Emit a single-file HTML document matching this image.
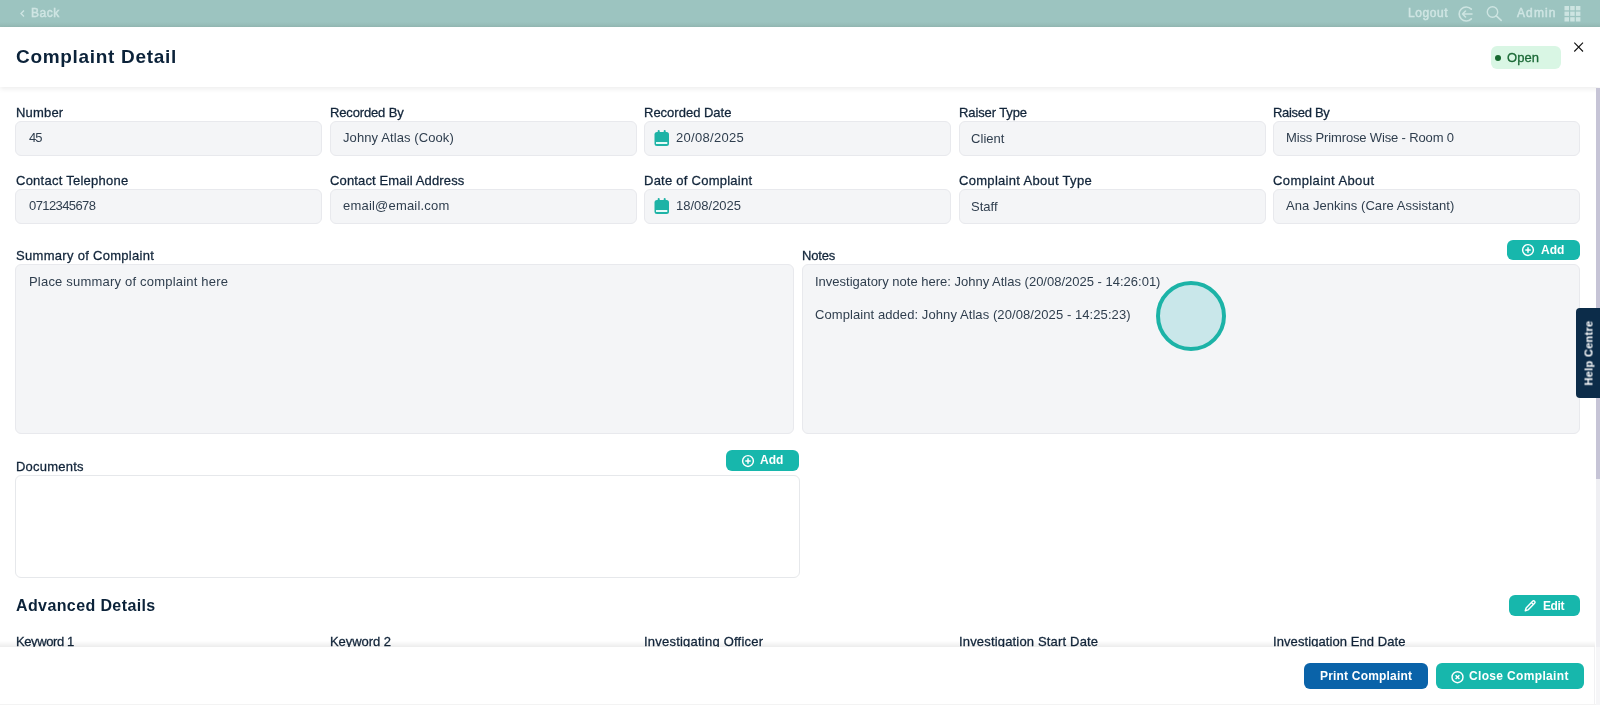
<!DOCTYPE html>
<html><head><meta charset="utf-8">
<style>
*{box-sizing:border-box;margin:0;padding:0}
html,body{width:1600px;height:705px;overflow:hidden;background:#fff;font-family:"Liberation Sans",sans-serif;position:relative}
.a{will-change:transform}
.a{position:absolute;white-space:nowrap;line-height:13px;font-size:13px}
.topbar{position:absolute;left:0;top:0;width:1600px;height:27px;background:#9cc4c0}
.topbar .sh{position:absolute;left:0;top:22px;width:1600px;height:5px;background:linear-gradient(#9cc4c0,#93b8b3)}
.tb{color:#cfe5e3;font-size:12px;line-height:12px;-webkit-text-stroke:0.45px #cfe5e3}
.hdr{position:absolute;left:0;top:27px;width:1600px;height:60px;background:#fff;box-shadow:0 2px 5px rgba(0,0,0,0.075)}
.lbl{color:#12253a;font-size:13px;-webkit-text-stroke:0.28px #12253a}
.val{color:#2f3e4e;font-size:13px}
.inp{position:absolute;height:35px;background:#f4f5f7;border:1px solid #e8e9ed;border-radius:6px}
.box{position:absolute;background:#f4f5f7;border:1px solid #e8e9ed;border-radius:6px}
.btn{position:absolute;background:#17b7ac;border-radius:6px;color:#fff;font-weight:bold}
</style></head><body>
<div class="topbar"><div class="sh"></div></div>
<svg style="position:absolute;left:19px;top:9px" width="8" height="9" viewBox="0 0 8 9"><path d="M5 1.5L2 4.5L5 7.5" stroke="#cfe5e3" stroke-width="1.3" fill="none"/></svg>
<div class="a tb" style="left:30.5px;top:7px;letter-spacing:0.5px">Back</div>
<div class="a tb" style="left:1407.5px;top:7px;letter-spacing:0.6px">Logout</div>
<div class="a tb" style="left:1516.5px;top:7px;letter-spacing:1.1px">Admin</div>
<svg style="position:absolute;left:1455px;top:5px" width="20" height="18" viewBox="0 0 20 18"><path d="M16.3 4.2A7 7 0 1 0 16.3 13.8" stroke="#cde4e1" stroke-width="1.7" fill="none" stroke-linecap="round"/><path d="M17 9H7.5M10.5 6L7.5 9L10.5 12" stroke="#cde4e1" stroke-width="1.6" fill="none" stroke-linecap="round" stroke-linejoin="round"/></svg>
<svg style="position:absolute;left:1485px;top:4px" width="20" height="20" viewBox="0 0 20 20"><circle cx="7.5" cy="8" r="5.2" stroke="#cde4e1" stroke-width="1.4" fill="none"/><path d="M11.3 11.8L16.2 16.4" stroke="#cde4e1" stroke-width="1.6" stroke-linecap="round"/></svg>
<svg style="position:absolute;left:1564px;top:6px" width="17" height="16" viewBox="0 0 17 16"><g fill="#cde4e1"><rect x="0.5" y="0" width="4.5" height="4.3"/><rect x="6.2" y="0" width="4.5" height="4.3"/><rect x="11.9" y="0" width="4.5" height="4.3"/><rect x="0.5" y="5.6" width="4.5" height="4.3"/><rect x="6.2" y="5.6" width="4.5" height="4.3"/><rect x="11.9" y="5.6" width="4.5" height="4.3"/><rect x="0.5" y="11.2" width="4.5" height="4.3"/><rect x="6.2" y="11.2" width="4.5" height="4.3"/><rect x="11.9" y="11.2" width="4.5" height="4.3"/></g></svg>

<div class="hdr"></div>
<div class="a" style="left:16px;top:47px;font-size:19px;line-height:19px;font-weight:bold;color:#0b2239;letter-spacing:0.69px">Complaint Detail</div>

<!-- badge -->
<div style="position:absolute;left:1491px;top:46px;width:69.5px;height:22.5px;background:#d9f6e4;border-radius:6px"></div>
<div style="position:absolute;left:1494.5px;top:54.5px;width:6px;height:6px;background:#17692f;border-radius:50%"></div>
<div class="a" style="left:1507px;top:51px;color:#1c6a37;font-size:13px;-webkit-text-stroke:0.3px #1c6a37;letter-spacing:0.1px">Open</div>

<!-- close x -->
<svg style="position:absolute;left:1572px;top:40px" width="14" height="14" viewBox="0 0 14 14"><path d="M2.3 2.7L11 11.5M11 2.7L2.3 11.5" stroke="#111" stroke-width="1.1" fill="none"/></svg>

<!-- scrollbar -->
<div style="position:absolute;left:1596px;top:88px;width:4px;height:559px;background:#efeff3"></div>
<div style="position:absolute;left:1595.5px;top:88px;width:4.5px;height:391px;background:#c6c4d6"></div>

<!-- Row 1 -->
<div class="a lbl" style="left:16px;top:106px;letter-spacing:0.19px">Number</div>
<div class="a lbl" style="left:330px;top:106px;letter-spacing:-0.15px">Recorded By</div>
<div class="a lbl" style="left:644px;top:106px">Recorded Date</div>
<div class="a lbl" style="left:959px;top:106px;letter-spacing:-0.11px">Raiser Type</div>
<div class="a lbl" style="left:1273px;top:106px;letter-spacing:-0.3px">Raised By</div>

<div class="inp" style="left:15px;top:121px;width:307px"></div>
<div class="inp" style="left:330px;top:121px;width:307px"></div>
<div class="inp" style="left:644px;top:121px;width:307px"></div>
<div class="inp" style="left:959px;top:121px;width:307px"></div>
<div class="inp" style="left:1273px;top:121px;width:307px"></div>

<div class="a val" style="left:29px;top:131px;letter-spacing:-1px">45</div>
<div class="a val" style="left:343px;top:131px;letter-spacing:0.1px">Johny Atlas (Cook)</div>
<svg style="position:absolute;left:654px;top:130px" width="16" height="17" viewBox="0 0 16 17"><rect x="0.5" y="2" width="14.5" height="14" rx="2.5" fill="#1eb3a6"/><rect x="3.7" y="0" width="2" height="4" rx="1" fill="#1eb3a6"/><rect x="9.7" y="0" width="2" height="4" rx="1" fill="#1eb3a6"/><rect x="2" y="12" width="11.3" height="2" fill="#e6fbf8"/></svg>
<div class="a val" style="left:676px;top:131px;letter-spacing:0.3px">20/08/2025</div>
<div class="a val" style="left:971px;top:132px;letter-spacing:0.05px">Client</div>
<div class="a val" style="left:1286px;top:131px;letter-spacing:-0.15px">Miss Primrose Wise - Room 0</div>

<!-- Row 2 -->
<div class="a lbl" style="left:16px;top:174px;letter-spacing:0.25px">Contact Telephone</div>
<div class="a lbl" style="left:330px;top:174px;letter-spacing:0.14px">Contact Email Address</div>
<div class="a lbl" style="left:644px;top:174px;letter-spacing:0.25px">Date of Complaint</div>
<div class="a lbl" style="left:959px;top:174px;letter-spacing:0.3px">Complaint About Type</div>
<div class="a lbl" style="left:1273px;top:174px;letter-spacing:0.4px">Complaint About</div>

<div class="inp" style="left:15px;top:189px;width:307px"></div>
<div class="inp" style="left:330px;top:189px;width:307px"></div>
<div class="inp" style="left:644px;top:189px;width:307px"></div>
<div class="inp" style="left:959px;top:189px;width:307px"></div>
<div class="inp" style="left:1273px;top:189px;width:307px"></div>

<div class="a val" style="left:29px;top:199px;letter-spacing:-0.6px">0712345678</div>
<div class="a val" style="left:343px;top:199px;letter-spacing:0.2px">email@email.com</div>
<svg style="position:absolute;left:654px;top:198px" width="16" height="17" viewBox="0 0 16 17"><rect x="0.5" y="2" width="14.5" height="14" rx="2.5" fill="#1eb3a6"/><rect x="3.7" y="0" width="2" height="4" rx="1" fill="#1eb3a6"/><rect x="9.7" y="0" width="2" height="4" rx="1" fill="#1eb3a6"/><rect x="2" y="12" width="11.3" height="2" fill="#e6fbf8"/></svg>
<div class="a val" style="left:676px;top:199px">18/08/2025</div>
<div class="a val" style="left:971px;top:200px">Staff</div>
<div class="a val" style="left:1286px;top:199px;letter-spacing:0.05px">Ana Jenkins (Care Assistant)</div>

<!-- Summary / Notes -->
<div class="a lbl" style="left:16px;top:249px;letter-spacing:0.3px">Summary of Complaint</div>
<div class="a lbl" style="left:802px;top:249px;letter-spacing:-0.19px">Notes</div>
<div class="box" style="left:15px;top:264px;width:779px;height:170px"></div>
<div class="box" style="left:802px;top:264px;width:778px;height:170px"></div>
<div class="a val" style="left:29px;top:275px;letter-spacing:0.2px">Place summary of complaint here</div>
<div class="a val" style="left:815px;top:275px">Investigatory note here: Johny Atlas (20/08/2025 - 14:26:01)</div>
<div class="a val" style="left:815px;top:308px;letter-spacing:0.08px">Complaint added: Johny Atlas (20/08/2025 - 14:25:23)</div>

<div class="btn" style="left:1507px;top:240px;width:73px;height:20px"></div>
<svg style="position:absolute;left:1521px;top:243px" width="14" height="14" viewBox="0 0 14 14"><circle cx="7" cy="7" r="5.4" stroke="#fff" stroke-width="1.45" fill="none"/><path d="M7 4.3V9.7M4.3 7H9.7" stroke="#fff" stroke-width="1.5"/></svg>
<div class="a" style="left:1541px;top:244px;font-size:12px;line-height:12px;color:#fff;font-weight:bold">Add</div>

<!-- cursor circle -->
<div style="position:absolute;left:1156px;top:281px;width:70px;height:70px;border-radius:50%;border:4px solid #1cb3a7;background:#c9e7ea"></div>

<!-- Help centre -->
<div style="position:absolute;left:1576px;top:308px;width:26px;height:90px;background:#0c2c49;border-radius:4px 0 0 4px"></div>
<div class="a" style="left:1589px;top:353px;transform:translate(-50%,-50%) rotate(-90deg);color:#fff;font-size:11px;line-height:11px;font-weight:bold;letter-spacing:0.3px">Help Centre</div>

<!-- Documents -->
<div class="a lbl" style="left:16px;top:460px;letter-spacing:0.23px">Documents</div>
<div style="position:absolute;left:15px;top:475px;width:785px;height:103px;border:1px solid #e6e8eb;border-radius:6px;background:#fff"></div>
<div class="btn" style="left:726px;top:450px;width:73px;height:21px"></div>
<svg style="position:absolute;left:740.5px;top:453.5px" width="14" height="14" viewBox="0 0 14 14"><circle cx="7" cy="7" r="5.4" stroke="#fff" stroke-width="1.45" fill="none"/><path d="M7 4.3V9.7M4.3 7H9.7" stroke="#fff" stroke-width="1.5"/></svg>
<div class="a" style="left:760px;top:454px;font-size:12px;line-height:12px;color:#fff;font-weight:bold">Add</div>

<!-- Advanced -->
<div class="a" style="left:16px;top:598px;font-size:16px;line-height:16px;font-weight:bold;color:#0b2239;letter-spacing:0.39px">Advanced Details</div>
<div class="btn" style="left:1509px;top:595px;width:71px;height:21px"></div>
<svg style="position:absolute;left:1523px;top:599px" width="14" height="14" viewBox="0 0 14 14"><path d="M9.6 2.3a1.4 1.4 0 0 1 2 2L5 10.9 2.3 11.7 3.1 9Z" stroke="#fff" stroke-width="1.45" fill="none" stroke-linejoin="round"/><path d="M8.4 3.5L10.5 5.6" stroke="#fff" stroke-width="1.2"/></svg>
<div class="a" style="left:1543px;top:600px;font-size:12px;line-height:12px;color:#fff;font-weight:bold;letter-spacing:-0.4px">Edit</div>

<div class="a lbl" style="left:16px;top:635px;letter-spacing:-0.39px">Keyword 1</div>
<div class="a lbl" style="left:330px;top:635px;letter-spacing:-0.05px">Keyword 2</div>
<div class="a lbl" style="left:644px;top:635px;letter-spacing:0.22px">Investigating Officer</div>
<div class="a lbl" style="left:959px;top:635px;letter-spacing:0.17px">Investigation Start Date</div>
<div class="a lbl" style="left:1273px;top:635px;letter-spacing:0.08px">Investigation End Date</div>

<!-- Footer -->
<div style="position:absolute;left:0;top:641px;width:1595px;height:6px;background:linear-gradient(rgba(0,0,0,0),rgba(0,0,0,0.075))"></div>
<div style="position:absolute;left:0;top:647px;width:1595px;height:57px;background:#fff;border-right:1px solid #f1f1f3"></div>
<div style="position:absolute;left:0;top:703.5px;width:1600px;height:1.5px;background:#f3f3f3"></div>
<div style="position:absolute;left:1596px;top:647px;width:4px;height:58px;background:#f6f6f8"></div>
<div style="position:absolute;left:1304px;top:663px;width:124px;height:26px;background:#0a63a9;border-radius:6px"></div>
<div class="a" style="left:1320px;top:670px;color:#fff;font-weight:bold;font-size:12px;line-height:12px;letter-spacing:0.19px">Print Complaint</div>
<div style="position:absolute;left:1436px;top:663px;width:148px;height:26px;background:#17b7ac;border-radius:6px"></div>
<svg style="position:absolute;left:1450px;top:669.5px" width="15" height="15" viewBox="0 0 15 15"><circle cx="7.5" cy="7.2" r="5.5" stroke="#fff" stroke-width="1.45" fill="none"/><path d="M5.6 5.3L9.4 9.1M9.4 5.3L5.6 9.1" stroke="#fff" stroke-width="1.4"/></svg>
<div class="a" style="left:1469px;top:670px;color:#fff;font-weight:bold;font-size:12px;line-height:12px;letter-spacing:0.34px">Close Complaint</div>
</body></html>
